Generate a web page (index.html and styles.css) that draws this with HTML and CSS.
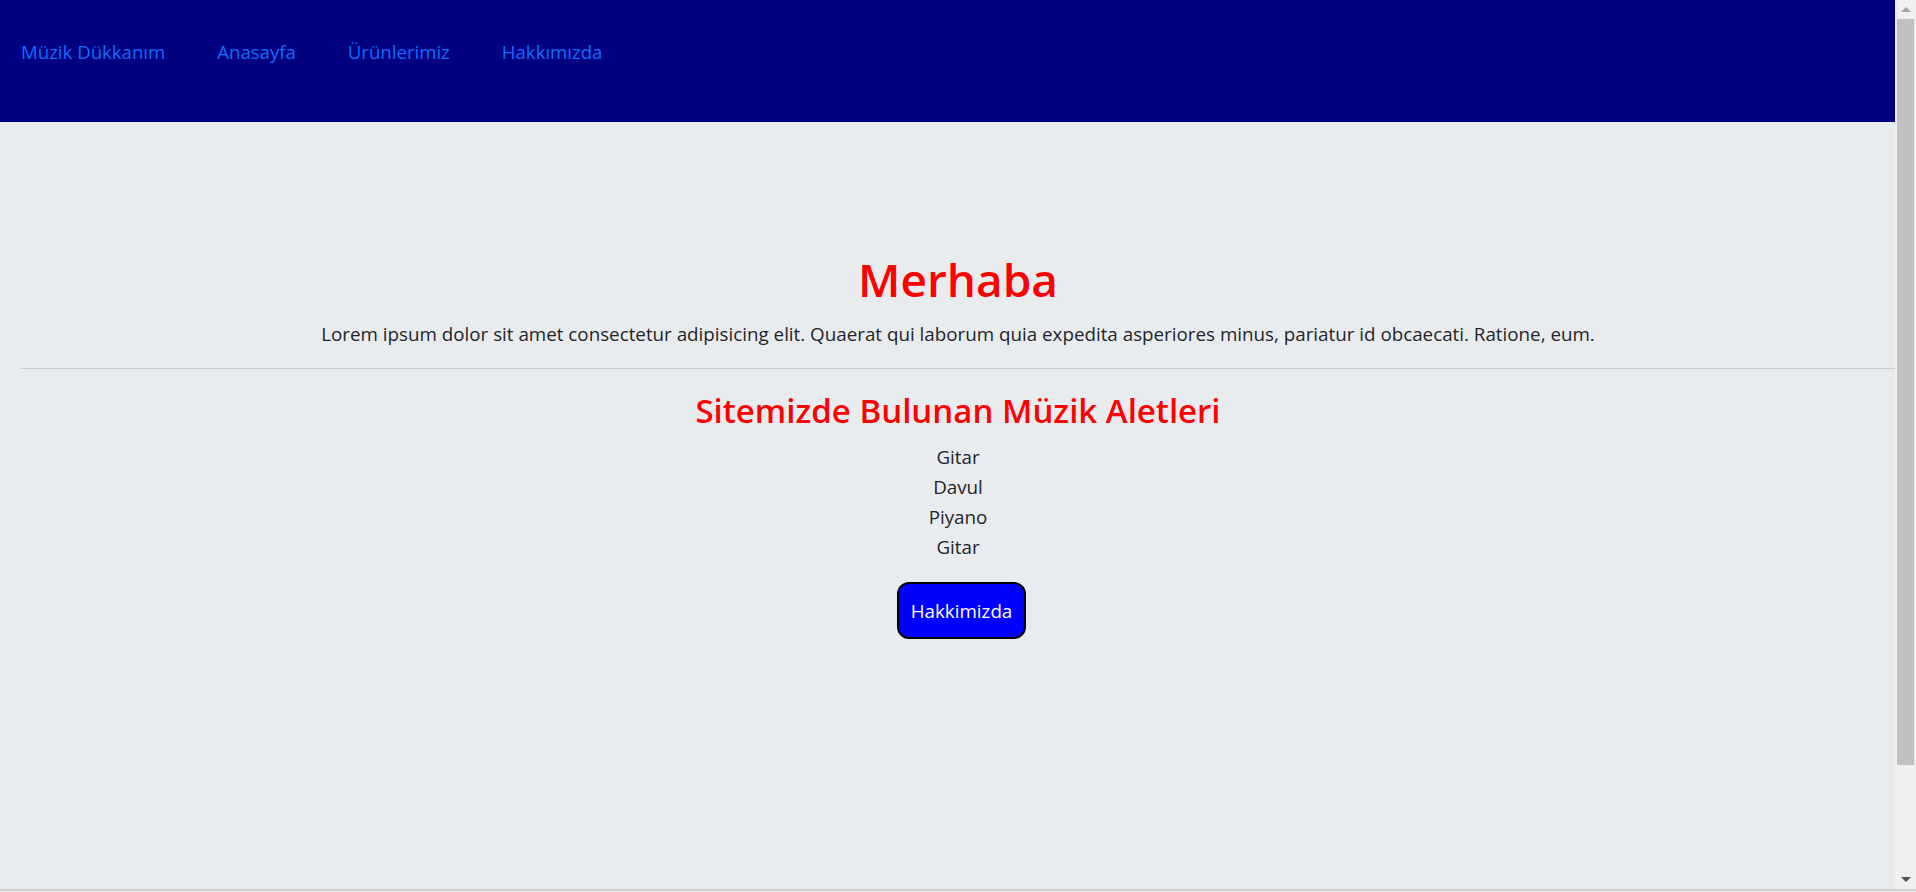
FILE: index.html
```html
<!DOCTYPE html>
<html lang="tr">
<head>
<meta charset="utf-8">
<title>Müzik Dükkanım</title>
<link rel="stylesheet" href="styles.css">
</head>
<body>
<div class="window-row">
  <div class="page">
    <nav class="topnav">
      <a class="nav-link" href="#">Müzik Dükkanım</a>
      <a class="nav-link" href="#">Anasayfa</a>
      <a class="nav-link" href="#">Ürünlerimiz</a>
      <a class="nav-link" href="#">Hakkımızda</a>
    </nav>
    <main class="content">
      <h1 class="title">Merhaba</h1>
      <p class="lead-text">Lorem ipsum dolor sit amet consectetur adipisicing elit. Quaerat qui laborum quia expedita asperiores minus, pariatur id obcaecati. Ratione, eum.</p>
      <hr class="divider">
      <h3 class="subtitle">Sitemizde Bulunan Müzik Aletleri</h3>
      <ul class="instrument-list">
        <li>Gitar</li>
        <li>Davul</li>
        <li>Piyano</li>
        <li>Gitar</li>
      </ul>
      <button class="about-btn" type="button">Hakkimizda</button>
    </main>
  </div>
  <div class="scrollbar" aria-hidden="true">
    <div class="sb-button"><span class="arrow-up"></span></div>
    <div class="sb-thumb"></div>
    <div class="sb-track"></div>
    <div class="sb-button"><span class="arrow-down"></span></div>
  </div>
</div>
<div class="window-edge"></div>
</body>
</html>
```
FILE: styles.css
```css
html {
  background: #e9ecef;
}
body {
  margin: 0;
  height: 100vh;
  display: flex;
  flex-direction: column;
  overflow: hidden;
  background: #e9ecef;
  color: #212529;
  font-family: "Open Sans", "Noto Sans", sans-serif;
  font-size: 18.8px;
  line-height: 30px;
}
.window-row {
  flex: 1;
  display: flex;
  min-height: 0;
}
.page {
  flex: 1;
  min-width: 0;
}
.topnav {
  display: flex;
  gap: 52px;
  height: 122px;
  box-sizing: border-box;
  padding: 37px 0 0 21px;
  background: #000080;
}
.nav-link {
  color: #0d6efd;
  text-decoration: none;
  font-size: 18.6px;
  line-height: 30px;
  height: 30px;
}
.content {
  display: flex;
  flex-direction: column;
  align-items: center;
  padding: 127px 0 0 21px;
  text-align: center;
}
.title {
  margin: 0 0 10px;
  color: #ff0000;
  font-size: 46px;
  font-weight: 600;
  line-height: 60px;
}
.lead-text {
  margin: 0;
}
.divider {
  align-self: stretch;
  margin: 19px 0 21px;
  border: 0;
  border-top: 1px solid #c9cccf;
}
.subtitle {
  margin: 0 0 10px;
  color: #ff0000;
  font-size: 33px;
  font-weight: 600;
  line-height: 42px;
}
.instrument-list {
  list-style: none;
  margin: 0;
  padding: 0;
}
.about-btn {
  margin: 20px 0 0 7px;
  height: 57px;
  padding: 0 12px;
  border: 2px solid #000;
  border-radius: 12px;
  background: #0000ff;
  color: #fff;
  font-family: inherit;
  font-size: 18.8px;
  line-height: 30px;
}
.scrollbar {
  width: 21px;
  display: flex;
  flex-direction: column;
  background: #f0f0f0;
}
.sb-button {
  height: 19px;
  display: flex;
  align-items: center;
  justify-content: center;
  padding-left: 1px;
}
.arrow-up {
  width: 0;
  height: 0;
  border-left: 5px solid transparent;
  border-right: 5px solid transparent;
  border-bottom: 5px solid #a3a3a3;
}
.arrow-down {
  width: 0;
  height: 0;
  border-left: 5px solid transparent;
  border-right: 5px solid transparent;
  border-top: 5px solid #505050;
}
.sb-thumb {
  height: 746px;
  margin: 0 2px 0 2px;
  background: #c1c1c1;
}
.sb-track {
  flex: 1;
}
.window-edge {
  height: 3px;
  box-sizing: border-box;
  border-top: 2px solid #cdcdcd;
  background: #eef0f2;
}
```
